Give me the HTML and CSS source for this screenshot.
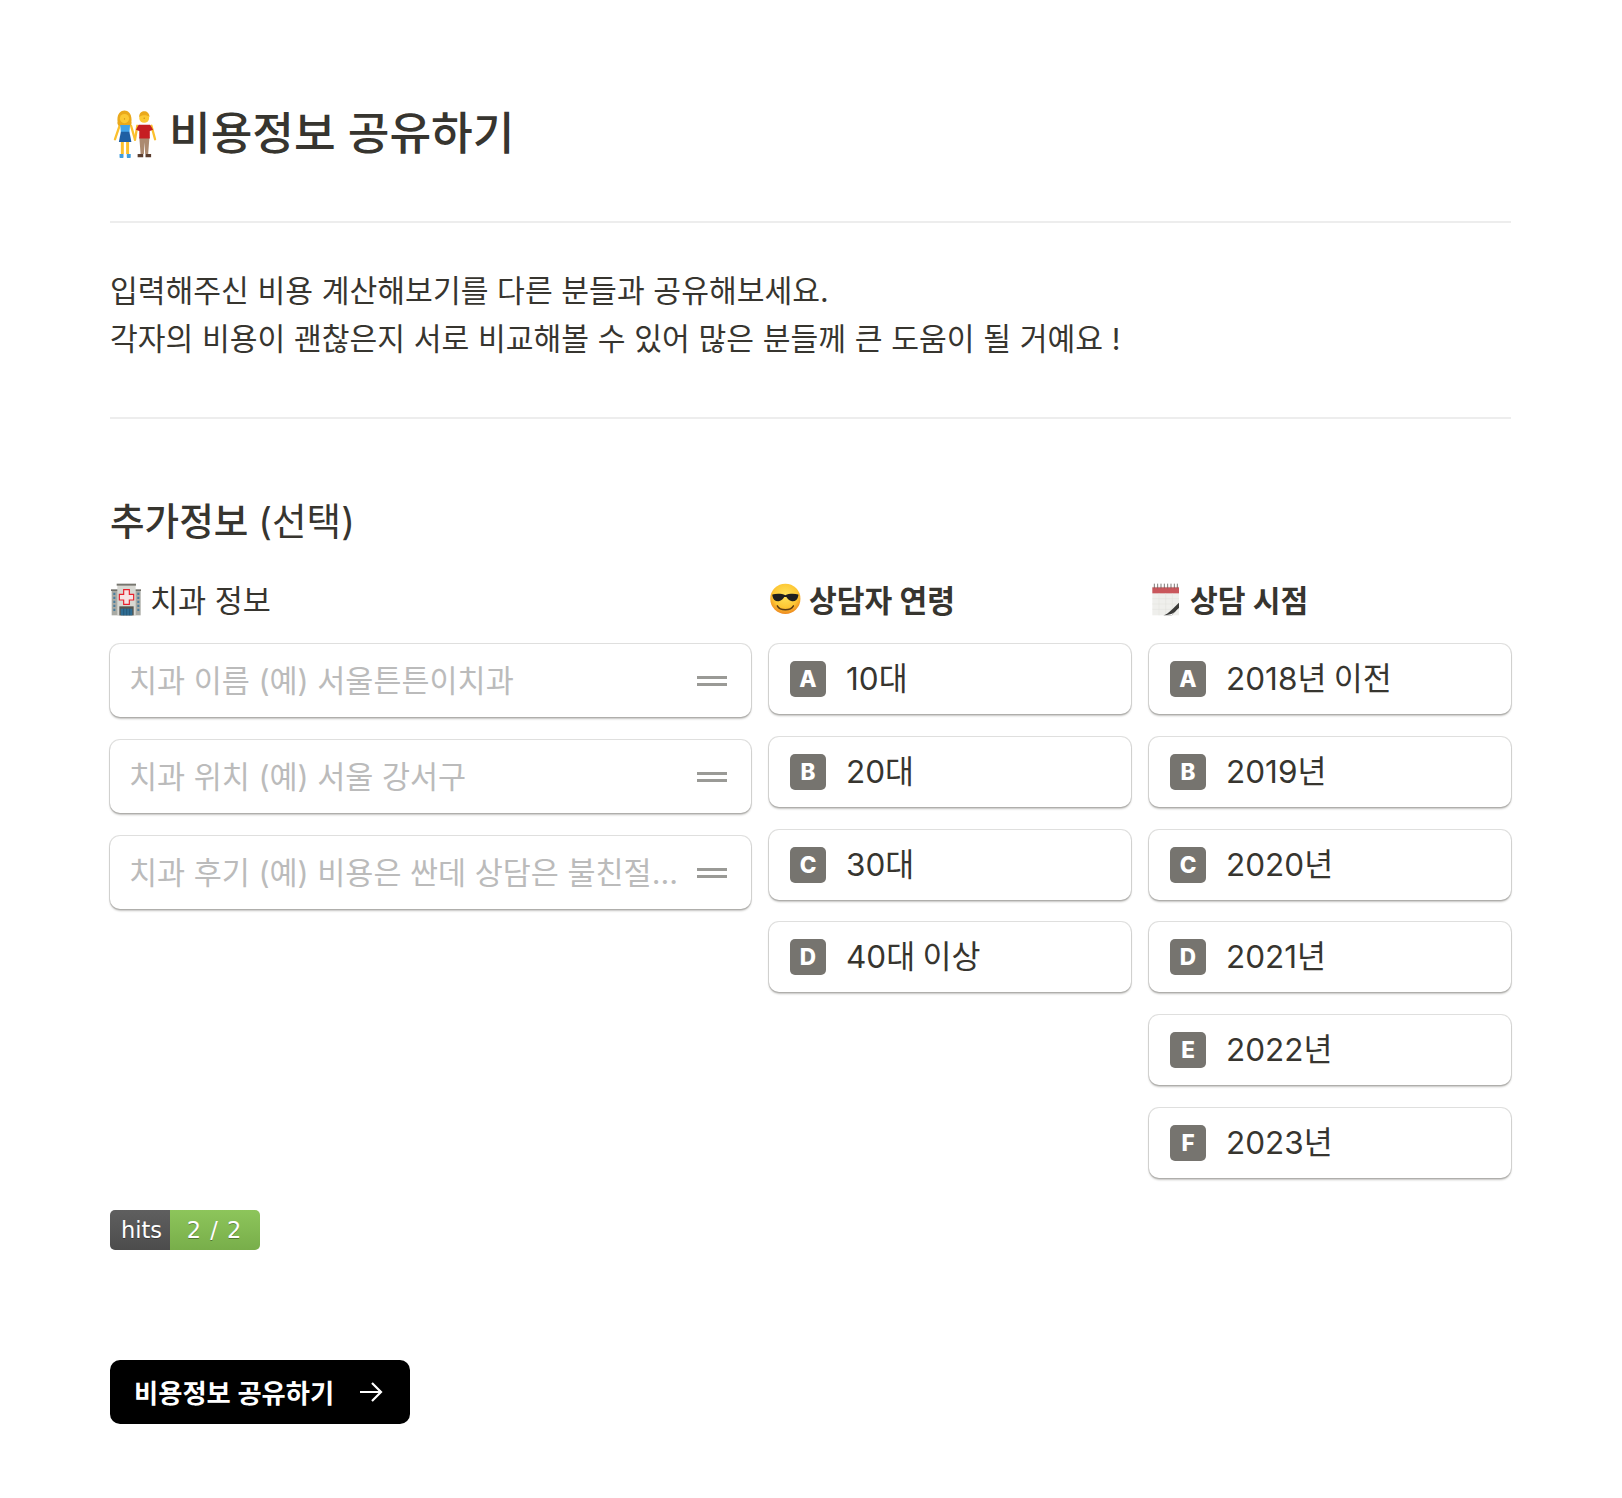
FILE: index.html
```html
<!DOCTYPE html>
<html lang="ko">

<head>
    <meta charset="UTF-8">
    <meta name="viewport" content="width=device-width, initial-scale=1.0">
    <title>비용정보 공유하기</title>
    <link rel="stylesheet" href="styles.css">
</head>

<body>
    <main class="page">
        <h1 class="title">
            <svg class="title-icon" viewBox="40 38 130 146" aria-hidden="true">
                <!-- woman -->
                <path d="M58 86 L44 127M93 86 L105 128" fill="none" stroke="#fbc02d" stroke-width="7" stroke-linecap="round" />
                <path d="M62 130h9v42h-9zM78 130h9v42h-9z" fill="#fbc02d" />
                <path d="M58 172h12v8a4 4 0 0 1-12 0zM80 172h12v8a4 4 0 0 1-12 0z" fill="#3f9de0" />
                <path d="M52 74 C46 28 100 28 94 74 C96 80 92 86 88 86 H58 C54 86 50 80 52 74Z" fill="#eaa91c" />
                <circle cx="73" cy="64" r="14" fill="#fcc934" />
                <path d="M60 84 H90 L88 106 H62Z" fill="#42a3e8" />
                <path d="M62 104 H88 L94 135 H56Z" fill="#1f5fa3" />
                <!-- man -->
                <path d="M112 86 L105 128M155 86 L166 127" fill="none" stroke="#fbc02d" stroke-width="7" stroke-linecap="round" />
                <path d="M118 120h31l-4 52h-9l-2-36-2 36h-10z" fill="#ac8a70" />
                <path d="M113 172h17v10h-17zM137 172h17v10h-17z" fill="#5b3d2e" />
                <path d="M116 83 H151 L160 98 L150 102 V125 H118 V102 L108 98Z" fill="#c61e22" />
                <circle cx="133" cy="62" r="15" fill="#fcc934" />
                <path d="M118 60 C116 36 150 36 149 60 C143 52 125 52 118 60Z" fill="#eaa91c" />
                <circle cx="73" cy="65" r="2" fill="#c78a14" />
                <circle cx="133" cy="63" r="2" fill="#c78a14" />
            </svg>
            <span>비용정보 공유하기</span>
        </h1>
        <hr class="rule">
        <p class="intro">입력해주신 비용 계산해보기를 다른 분들과 공유해보세요.<br>각자의 비용이 괜찮은지 서로 비교해볼 수 있어 많은 분들께 큰 도움이 될 거예요 !</p>
        <hr class="rule">

        <h2 class="section-title">추가정보 <span class="section-note">(선택)</span></h2>

        <div class="form-grid">
            <section class="col">
                <h3 class="label label-plain">
                    <svg class="label-icon" viewBox="31 25 94 99" aria-hidden="true">
                        <path d="M35 48h87v74H35z" fill="#a9aaa4" />
                        <path d="M33 44h90v5H33z" fill="#6f6e68" />
                        <path d="M52 32h55v90H52z" fill="#d8d8d3" />
                        <path d="M50 27h58v6H50z" fill="#77766f" />
                        <path d="M40 54h6v7h-6zM40 66h6v7h-6zM40 78h6v7h-6zM40 90h6v7h-6zM40 102h6v7h-6zM112 54h6v7h-6zM112 66h6v7h-6zM112 78h6v7h-6zM112 90h6v7h-6zM112 102h6v7h-6z" fill="#4a7d9d" />
                        <path d="M71 45h17v14h13v17H88v13H71V76H58V59h13z" fill="#f6e4e4" stroke="#e8202c" stroke-width="3.500" />
                        <path d="M58 95h43v27H58z" fill="#55544f" />
                        <path d="M62 102h35v20H62z" fill="#2f6d93" />
                        <path d="M71 102v20M80 102v20M89 102v20" stroke="#1d4560" stroke-width="1.500" />
                    </svg>
                    <span>치과 정보</span>
                </h3>
                <div class="field-list">
                    <div class="field">
                        <span class="placeholder">치과 이름 (예) 서울튼튼이치과</span>
                        <span class="grip"></span>
                    </div>
                    <div class="field">
                        <span class="placeholder">치과 위치 (예) 서울 강서구</span>
                        <span class="grip"></span>
                    </div>
                    <div class="field">
                        <span class="placeholder">치과 후기 (예) 비용은 싼데 상담은 불친절...</span>
                        <span class="grip"></span>
                    </div>
                </div>
            </section>

            <section class="col">
                <h3 class="label">
                    <svg class="label-icon" viewBox="32 28 90 94" aria-hidden="true">
                        <defs>
                            <radialGradient id="faceFill" cx="50%" cy="38%" r="62%">
                                <stop offset="0" stop-color="#ffe45e" />
                                <stop offset="0.65" stop-color="#fdc734" />
                                <stop offset="1" stop-color="#ee8a1f" />
                            </radialGradient>
                        </defs>
                        <circle cx="78" cy="73" r="43" fill="url(#faceFill)" />
                        <path d="M41 61 C52 58 68 58 78 63 C88 58 104 58 115 61 V64 C113 75 106 81 97 80 C88 79 84 72 81 68 H75 C72 72 68 79 59 80 C50 81 43 75 41 64Z" fill="#1f1f1f" />
                        <path d="M55 93 C63 108 93 108 101 93" fill="none" stroke="#5a3a12" stroke-width="4" stroke-linecap="round" />
                    </svg>
                    <span>상담자 연령</span>
                </h3>
                <div class="option-list">
                    <div class="option"><span class="key">A</span><span>10대</span></div>
                    <div class="option"><span class="key">B</span><span>20대</span></div>
                    <div class="option"><span class="key">C</span><span>30대</span></div>
                    <div class="option"><span class="key">D</span><span>40대 이상</span></div>
                </div>
            </section>

            <section class="col">
                <h3 class="label label-date">
                    <svg class="label-icon" viewBox="31 25 94 99" aria-hidden="true">
                        <path d="M37 36h80v86H37z" fill="#efefec" />
                        <path d="M37 38h80v18H37z" fill="#c9575c" />
                        <path d="M43 27v14M53 27v14M63 27v14M73 27v14M83 27v14M93 27v14M103 27v14M112 27v14" stroke="#66605e" stroke-width="2.500" />
                        <path d="M37 72h80M37 88h80M37 104h80M57 56v66M77 56v66M97 56v66" stroke="#e0e0dc" stroke-width="1.500" />
                        <path d="M70 122 C85 118 100 100 117 84 V100 L95 122Z" fill="#3b3b39" />
                        <path d="M70 122 C90 122 108 114 117 100 L95 122Z" fill="#fff" />
                    </svg>
                    <span>상담 시점</span>
                </h3>
                <div class="option-list">
                    <div class="option"><span class="key">A</span><span>2018년 이전</span></div>
                    <div class="option"><span class="key">B</span><span>2019년</span></div>
                    <div class="option"><span class="key">C</span><span>2020년</span></div>
                    <div class="option"><span class="key">D</span><span>2021년</span></div>
                    <div class="option"><span class="key">E</span><span>2022년</span></div>
                    <div class="option"><span class="key">F</span><span>2023년</span></div>
                </div>
            </section>
        </div>

        <div class="hits"><span class="hits-name">hits</span><span class="hits-count">2 / 2</span></div>

        <button class="share-btn" type="button">
            <span>비용정보 공유하기</span>
            <svg class="share-arrow" viewBox="0 0 24 24" aria-hidden="true">
                <path d="M1 12h21M13 3l9 9-9 9" fill="none" stroke="#fff" stroke-width="2.200" />
            </svg>
        </button>
    </main>
</body>

</html>
```

FILE: styles.css
```css
* {
    margin: 0;
    padding: 0;
    box-sizing: border-box;
}

body {
    background-color: #fff;
    color: #37352f;
    font-family: "Inter", "Noto Sans CJK KR", sans-serif;
}

.page {
    width: 1401px;
    margin-left: 110px;
    padding-top: 102px;
}

.title {
    display: flex;
    align-items: center;
    gap: 11px;
    height: 64px;
    font-size: 45.300px;
    font-weight: 500;
    line-height: 64px;
}

.title-icon {
    width: 46px;
    height: 48px;
    margin-left: 2px;
}

.rule {
    border: 0;
    height: 2px;
    background-color: #ededed;
}

.title + .rule {
    margin-top: 55px;
}

.intro {
    margin: 44px 0 54px;
    font-size: 30.200px;
    font-weight: 400;
    line-height: 48px;
    word-spacing: .2px;
}

.section-title {
    margin-top: 75px;
    font-size: 37.600px;
    font-weight: 500;
    line-height: 56px;
}

.section-note {
    font-weight: 400;
}

.form-grid {
    display: grid;
    grid-template-columns: 641px 362px 362px;
    column-gap: 18px;
    margin-top: 27px;
}

.label {
    display: flex;
    align-items: center;
    gap: 8px;
    height: 44px;
    margin-bottom: 23px;
    font-size: 30.200px;
    font-weight: 700;
}

.label-plain {
    font-size: 30.500px;
    font-weight: 400;
}

.label-date .label-icon {
    margin-left: 1px;
}

.label-icon {
    width: 32px;
    height: 33px;
}

.field-list {
    display: flex;
    flex-direction: column;
    gap: 23px;
}

.option-list {
    display: flex;
    flex-direction: column;
    gap: 22.800px;
}

.field,
.option {
    display: flex;
    align-items: center;
    background-color: #fff;
    border-radius: 10px;
    box-shadow: 0 0 0 1px rgba(55, 53, 47, .16), 0 2px 2px rgba(55, 53, 47, .3);
}

.field {
    justify-content: space-between;
    height: 73px;
    padding: 0 24px 0 19px;
    font-size: 30.500px;
}

.placeholder {
    padding-bottom: 4px;
    color: #bbb;
}

.grip {
    width: 30px;
    height: 10px;
    border-top: 3px solid #9a9a96;
    border-bottom: 3px solid #9a9a96;
}

.option {
    gap: 20px;
    height: 70px;
    padding-left: 21px;
    font-size: 31.500px;
    word-spacing: -1.500px;
}

.option > span:last-child {
    padding-bottom: 6px;
}

.key {
    display: flex;
    align-items: center;
    justify-content: center;
    width: 36px;
    height: 36px;
    padding-bottom: 1px;
    border-radius: 5px;
    background-color: #76746f;
    color: #fff;
    font-size: 22.500px;
    font-weight: 800;
}

.hits {
    display: flex;
    width: 150px;
    height: 40px;
    margin-top: 32px;
    border-radius: 5px;
    overflow: hidden;
    color: #fff;
    font-family: "DejaVu Sans", sans-serif;
    font-size: 22.500px;
    line-height: 41px;
    text-align: center;
    text-shadow: 0 1px 0 rgba(0, 0, 0, .35);
}

.hits-name {
    width: 60px;
    padding-left: 3px;
    background: linear-gradient(#5f5f5f, #4c4c4c);
}

.hits-count {
    flex: 1;
    padding-right: 2px;
    background: linear-gradient(#8dc55b, #78ae4a);
    word-spacing: 2px;
}

.share-btn {
    display: flex;
    align-items: center;
    justify-content: space-between;
    width: 300px;
    height: 64px;
    margin-top: 110px;
    margin-bottom: 74px;
    padding: 0 27px 0 24px;
    border: 0;
    border-radius: 10px;
    background-color: #000;
    color: #fff;
    font-family: inherit;
    font-size: 26.300px;
    font-weight: 600;
}

.share-arrow {
    width: 24px;
    height: 24px;
}
```
